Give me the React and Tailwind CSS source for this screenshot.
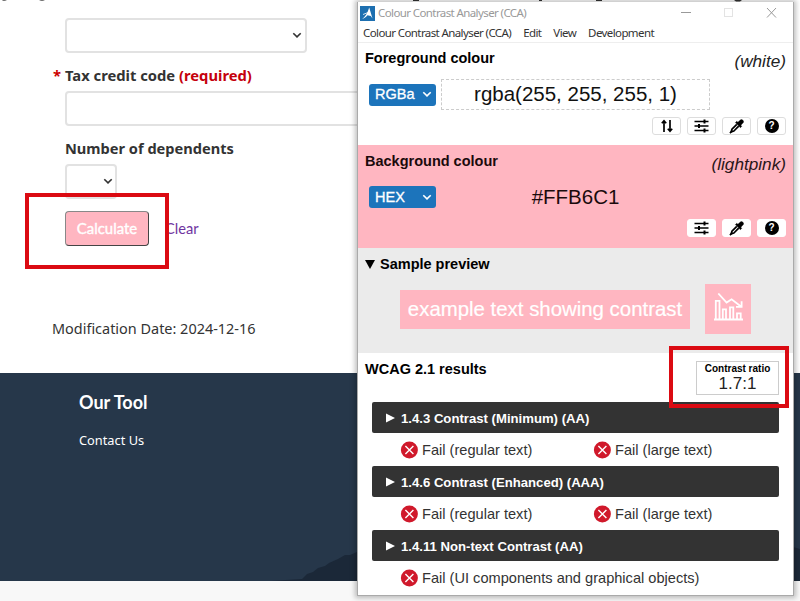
import React from "react";

const sans = "font-['Liberation_Sans',Arial,sans-serif]";
const noto = "font-['Noto_Sans',sans-serif]";

function Chevron({ className = "" }) {
  return (
    <svg className={className} width="10" height="7" viewBox="0 0 10 7" fill="none" stroke="currentColor" strokeWidth="1.6">
      <path d="M1.300 1.200 5 4.900 8.700 1.200" />
    </svg>
  );
}

function SlidersIcon() {
  return (
    <svg width="15" height="14" viewBox="0 0 15 14" stroke="#000" fill="none">
      <path strokeWidth="1.3" d="M.5 2.5h14M.5 7h14M.5 11.500h14" />
      <path strokeWidth="2" d="M10.500 .5v4M5 5v4M10.500 9.500v4" />
    </svg>
  );
}

function DropperIcon() {
  return (
    <svg width="15" height="15" viewBox="0 0 15 15">
      <path d="M7.800 5.300 3 10.100 2.100 12.900 4.900 12 9.700 7.200" fill="none" stroke="#000" strokeWidth="1.700" strokeLinejoin="round" />
      <path d="M.9 14.100 2.500 12.500" stroke="#000" strokeWidth="1.600" />
      <path d="M6.400 3.600 7.800 2.300 8.900 3.300 11 1.200a2 2 0 0 1 2.900 2.900L11.800 6.200 12.800 7.300 11.400 8.700Z" fill="#000" stroke="#000" strokeWidth=".4" />
    </svg>
  );
}

function HelpIcon() {
  return (
    <span className="flex h-[14px] w-[14px] items-center justify-center rounded-full bg-black text-[10px] font-bold leading-none text-white">?</span>
  );
}

function SwapIcon() {
  return (
    <svg width="14" height="14" viewBox="0 0 14 14" stroke="#000" fill="none" strokeWidth="1.700">
      <path d="M4 13V2M1.800 4.200 4 1.800 6.200 4.200M10 1v11M7.800 9.800 10 12.200 12.200 9.800" />
    </svg>
  );
}

function ToolButton({ children, border }) {
  return (
    <span className={`flex h-[18px] w-[29px] items-center justify-center rounded-[3px] border bg-white ${border}`}>
      {children}
    </span>
  );
}

function FormatSelect({ label }) {
  return (
    <div className="flex h-[22px] w-[67px] items-center justify-between rounded-[3px] bg-[#1c74bb] pl-[6px] pr-1 text-[14.500px] leading-none text-white">
      <span className="[-webkit-text-stroke:0.3px_white]">{label}</span>
      <Chevron />
    </div>
  );
}

function FailIcon() {
  return (
    <svg width="18" height="18" viewBox="0 0 18 18">
      <circle cx="9.400" cy="9" r="8.500" fill="#d0192b" />
      <path d="M5.400 5 13.400 13M13.400 5 5.400 13" stroke="#fff" strokeWidth="1.400" />
    </svg>
  );
}

function Fail({ text, className }) {
  return (
    <div className={`flex items-center gap-1 whitespace-nowrap ${className}`}>
      <FailIcon />
      <span className="text-[14.600px] leading-[18px] text-[#333]">{text}</span>
    </div>
  );
}

function Criterion({ title }) {
  return (
    <div className="flex h-[31px] items-center rounded-[2px] bg-[#333] pl-[14px] pt-[2px] text-[13.150px] font-bold text-white">
      <svg className="-mt-[2px]" width="9" height="10" viewBox="0 0 9 10"><path d="M0 .5 9 5 0 9.500Z" fill="#fff" /></svg>
      <span className="ml-[6px]">{title}</span>
    </div>
  );
}

function FormPage() {
  return (
    <div className={`h-[601px] w-[800px] overflow-hidden bg-white ${noto}`}>
      <svg className="block" width="800" height="4" viewBox="0 0 800 4">
        <path d="M2 0H7L5 1H3ZM39 0h6l-2 1h-2Z" fill="#777" />
        <path d="M413 0h6v1h-6ZM539 0h3v1h-3ZM596 0h6v1h-6ZM734 0h8l-2 1.500h-4Z" fill="#333" />
      </svg>
      <main className="h-[369px] pl-[65px] pt-[14px] text-[#333]">
        <div className="flex h-[35px] w-[242px] items-center justify-end rounded-[4px] border-2 border-[#e2e2e2] pr-[3px]">
          <Chevron />
        </div>
        <div className="-ml-[12px] mt-[12px] flex h-5 items-center text-[14.750px] font-bold leading-5">
          <span className="w-[12px] text-[#c00]">*</span>
          <span>Tax credit code <span className="text-[#c5000d]">(required)</span></span>
        </div>
        <div className="mt-[6px] h-[35px] w-[700px] rounded-[4px] border-2 border-[#e2e2e2]" />
        <div className="mt-[12px] text-[14.600px] font-bold leading-5">Number of dependents</div>
        <div className="mt-[6px] flex h-[35px] w-[52px] items-center justify-end rounded-[4px] border-2 border-[#e2e2e2] pr-[2px]">
          <Chevron />
        </div>
        <div className="mt-[12px] flex items-center font-['Lato',sans-serif]">
          <span className="flex h-[35px] w-[84px] items-center justify-center rounded-[4px] border border-b-[#444] border-l-[#888] border-r-[#444] border-t-[#888] bg-[#ffb6c1] text-[14.900px] text-white [-webkit-text-stroke:0.4px_white]">Calculate</span>
          <span className="ml-[16px] text-[14.700px] text-[#6f35a0]">Clear</span>
        </div>
        <div className="-ml-[13px] mt-[73px] text-[14.450px] leading-5">Modification Date: 2024-12-16</div>
      </main>
      <footer className="flex h-[208px] flex-col justify-between bg-[#26374a] text-white">
        <div className="pl-[79px] pt-[17px]">
          <div className="font-['Lato',sans-serif] text-[18px] font-bold leading-6">Our Tool</div>
          <div className="mt-[17px] text-[12.800px] leading-[18px]">Contact Us</div>
        </div>
        <svg className="block" width="800" height="40" viewBox="0 0 800 40">
          <path d="M270 40 302 38 307 33 313 31 318 27 325 25 329 22 338 18 345 14 350 14 357 11 500 0 793 6 800 8V40Z" fill="#1b2838" />
        </svg>
      </footer>
      <div className="h-5 bg-[#f8f8f8]" />
    </div>
  );
}

function TitleBar() {
  return (
    <div className="flex h-[22px] items-center pl-[2px]">
      <svg width="15" height="15" viewBox="0 0 15 15">
        <rect width="15" height="15" fill="#1d6fb0" />
        <path d="M2 12.800C5 11.500 7.500 7 9.200 1.500L12.500 12.500 10.800 10 7.500 9.200C5.500 11.500 4 12.500 2 12.800Z" fill="#fff" />
        <path d="M3 8.500 8 6.500" stroke="#fff" strokeWidth=".8" />
      </svg>
      <span className="ml-[3px] text-[11.500px] leading-4 tracking-[-0.600px] text-[#999]">Colour Contrast Analyser (CCA)</span>
      <svg className="ml-auto mr-[16px]" width="97" height="12" viewBox="0 0 97 12" fill="none">
        <path d="M1 5.500h10" stroke="#999" />
        <rect x="44.500" y="1.500" width="8" height="8" stroke="#e3e3e3" />
        <path d="M87 1 96 10.500M96 1 87 10.500" stroke="#999" />
      </svg>
    </div>
  );
}

function Analyser() {
  return (
    <div className={`absolute left-[357px] top-[2px] h-[594px] w-[437px] border-x border-b border-[#aaa] bg-white text-black shadow-[0_0_5px_2px_rgba(0,0,0,0.25)] ${sans}`}>
      <div className={noto}>
        <TitleBar />
        <div className="flex h-[19px] items-center gap-[12px] border-b border-[#eee] pl-[5px] text-[11.500px] leading-4 tracking-[-0.600px] text-[#333]">
          <span>Colour Contrast Analyser (CCA)</span>
          <span>Edit</span>
          <span>View</span>
          <span>Development</span>
        </div>
      </div>

      <section className="h-[102px] px-[7px]">
        <div className="flex h-[36px] justify-between">
          <span className="pt-[6px] text-[14.500px] font-bold leading-[18px]">Foreground colour</span>
          <span className="pt-[8px] text-[17.200px] italic leading-[20px] text-[#222]">(white)</span>
        </div>
        <div className="flex items-center pl-[4px]">
          <FormatSelect label="RGBa" />
          <div className="ml-[5px] flex h-[31px] w-[269px] items-center justify-center border border-dashed border-[#ccc] text-[20.500px] text-[#111]">rgba(255, 255, 255, 1)</div>
        </div>
        <div className="mt-[7px] flex justify-end gap-[6px]">
          <ToolButton border="border-[#ddd]"><SwapIcon /></ToolButton>
          <ToolButton border="border-[#ddd]"><SlidersIcon /></ToolButton>
          <ToolButton border="border-[#ddd]"><DropperIcon /></ToolButton>
          <ToolButton border="border-[#ddd]"><HelpIcon /></ToolButton>
        </div>
      </section>

      <section className="h-[103px] bg-[#ffb6c1] px-[7px]">
        <div className="flex h-[37px] justify-between">
          <span className="pt-[7px] text-[14.500px] font-bold leading-[18px] text-[#1a0a0c]">Background colour</span>
          <span className="pt-[9px] text-[17.200px] italic leading-[20px] text-[#2a1518]">(lightpink)</span>
        </div>
        <div className="flex items-center pl-[4px]">
          <FormatSelect label="HEX" />
          <div className="ml-[5px] flex h-[30px] w-[269px] items-center justify-center text-[20.500px] text-[#1a0a0c]">#FFB6C1</div>
        </div>
        <div className="mt-[7px] flex justify-end gap-[6px]">
          <ToolButton border="border-white"><SlidersIcon /></ToolButton>
          <ToolButton border="border-white"><DropperIcon /></ToolButton>
          <ToolButton border="border-white"><HelpIcon /></ToolButton>
        </div>
      </section>

      <section className="h-[105px] bg-[#ebebeb] px-[7px] pt-[7px]">
        <div className="flex h-[18px] items-center text-[14.500px] font-bold leading-[18px]">
          <svg width="10" height="9" viewBox="0 0 10 9"><path d="M0 0H10L5 9Z" /></svg>
          <span className="ml-[5px]">Sample preview</span>
        </div>
        <div className="mt-[11px] flex items-center pl-[35px]">
          <span className="flex h-[39px] w-[290px] items-center justify-center whitespace-nowrap bg-[#ffb6c1] text-[20.400px] text-white [-webkit-text-stroke:0.2px_white]">example text showing contrast</span>
          <span className="ml-[15px] flex h-[50px] w-[46px] justify-center bg-[#ffb6c1] pt-[9px]">
            <svg width="29" height="28" viewBox="0 0 29 28" fill="none" stroke="#fff" strokeWidth="1.800">
              <path d="M0 26.500H29M1.800 26.500V7.800H5.500V26.500M8.800 26.500V16.300H12V26.500M16 26.500V14.300H19.300V26.500M23 26.500V20.300H26.700V26.500" />
              <path d="M4.300 .5 12.600 9.600 17.600 6.300 27 13.500M27.600 8.300V13.800H22" />
            </svg>
          </span>
        </div>
      </section>

      <section>
        <div className="flex h-[49px] justify-between pl-[7px] pr-[14px]">
          <span className="pt-[7px] text-[14.500px] font-bold leading-[18px]">WCAG 2.1 results</span>
          <div className="mt-[8px] flex h-[34px] w-[83px] flex-col items-center border border-[#ccc] pt-px">
            <span className="text-[10px] font-bold leading-[11px]">Contrast ratio</span>
            <span className="text-[17px] leading-[20px] text-[#222]">1.7:1</span>
          </div>
        </div>
        <div className="px-[14px]">
          <Criterion title="1.4.3 Contrast (Minimum) (AA)" />
          <div className="flex h-[33px] items-center pl-[28px]">
            <Fail className="w-[193px]" text="Fail (regular text)" />
            <Fail className="" text="Fail (large text)" />
          </div>
          <Criterion title="1.4.6 Contrast (Enhanced) (AAA)" />
          <div className="flex h-[33px] items-center pl-[28px]">
            <Fail className="w-[193px]" text="Fail (regular text)" />
            <Fail className="" text="Fail (large text)" />
          </div>
          <Criterion title="1.4.11 Non-text Contrast (AA)" />
          <div className="flex h-[33px] items-center pl-[28px]">
            <Fail className="" text="Fail (UI components and graphical objects)" />
          </div>
        </div>
      </section>
    </div>
  );
}

export default function App() {
  return (
    <div className="relative h-[601px] w-[800px] overflow-hidden">
      <FormPage />
      <Analyser />
      <div className="absolute left-[25px] top-[193px] h-[76px] w-[144px] border-[4px] border-[#db0a12]" />
      <div className="absolute left-[669px] top-[346px] h-[62px] w-[120px] border-[4px] border-[#db0a12]" />
    </div>
  );
}
